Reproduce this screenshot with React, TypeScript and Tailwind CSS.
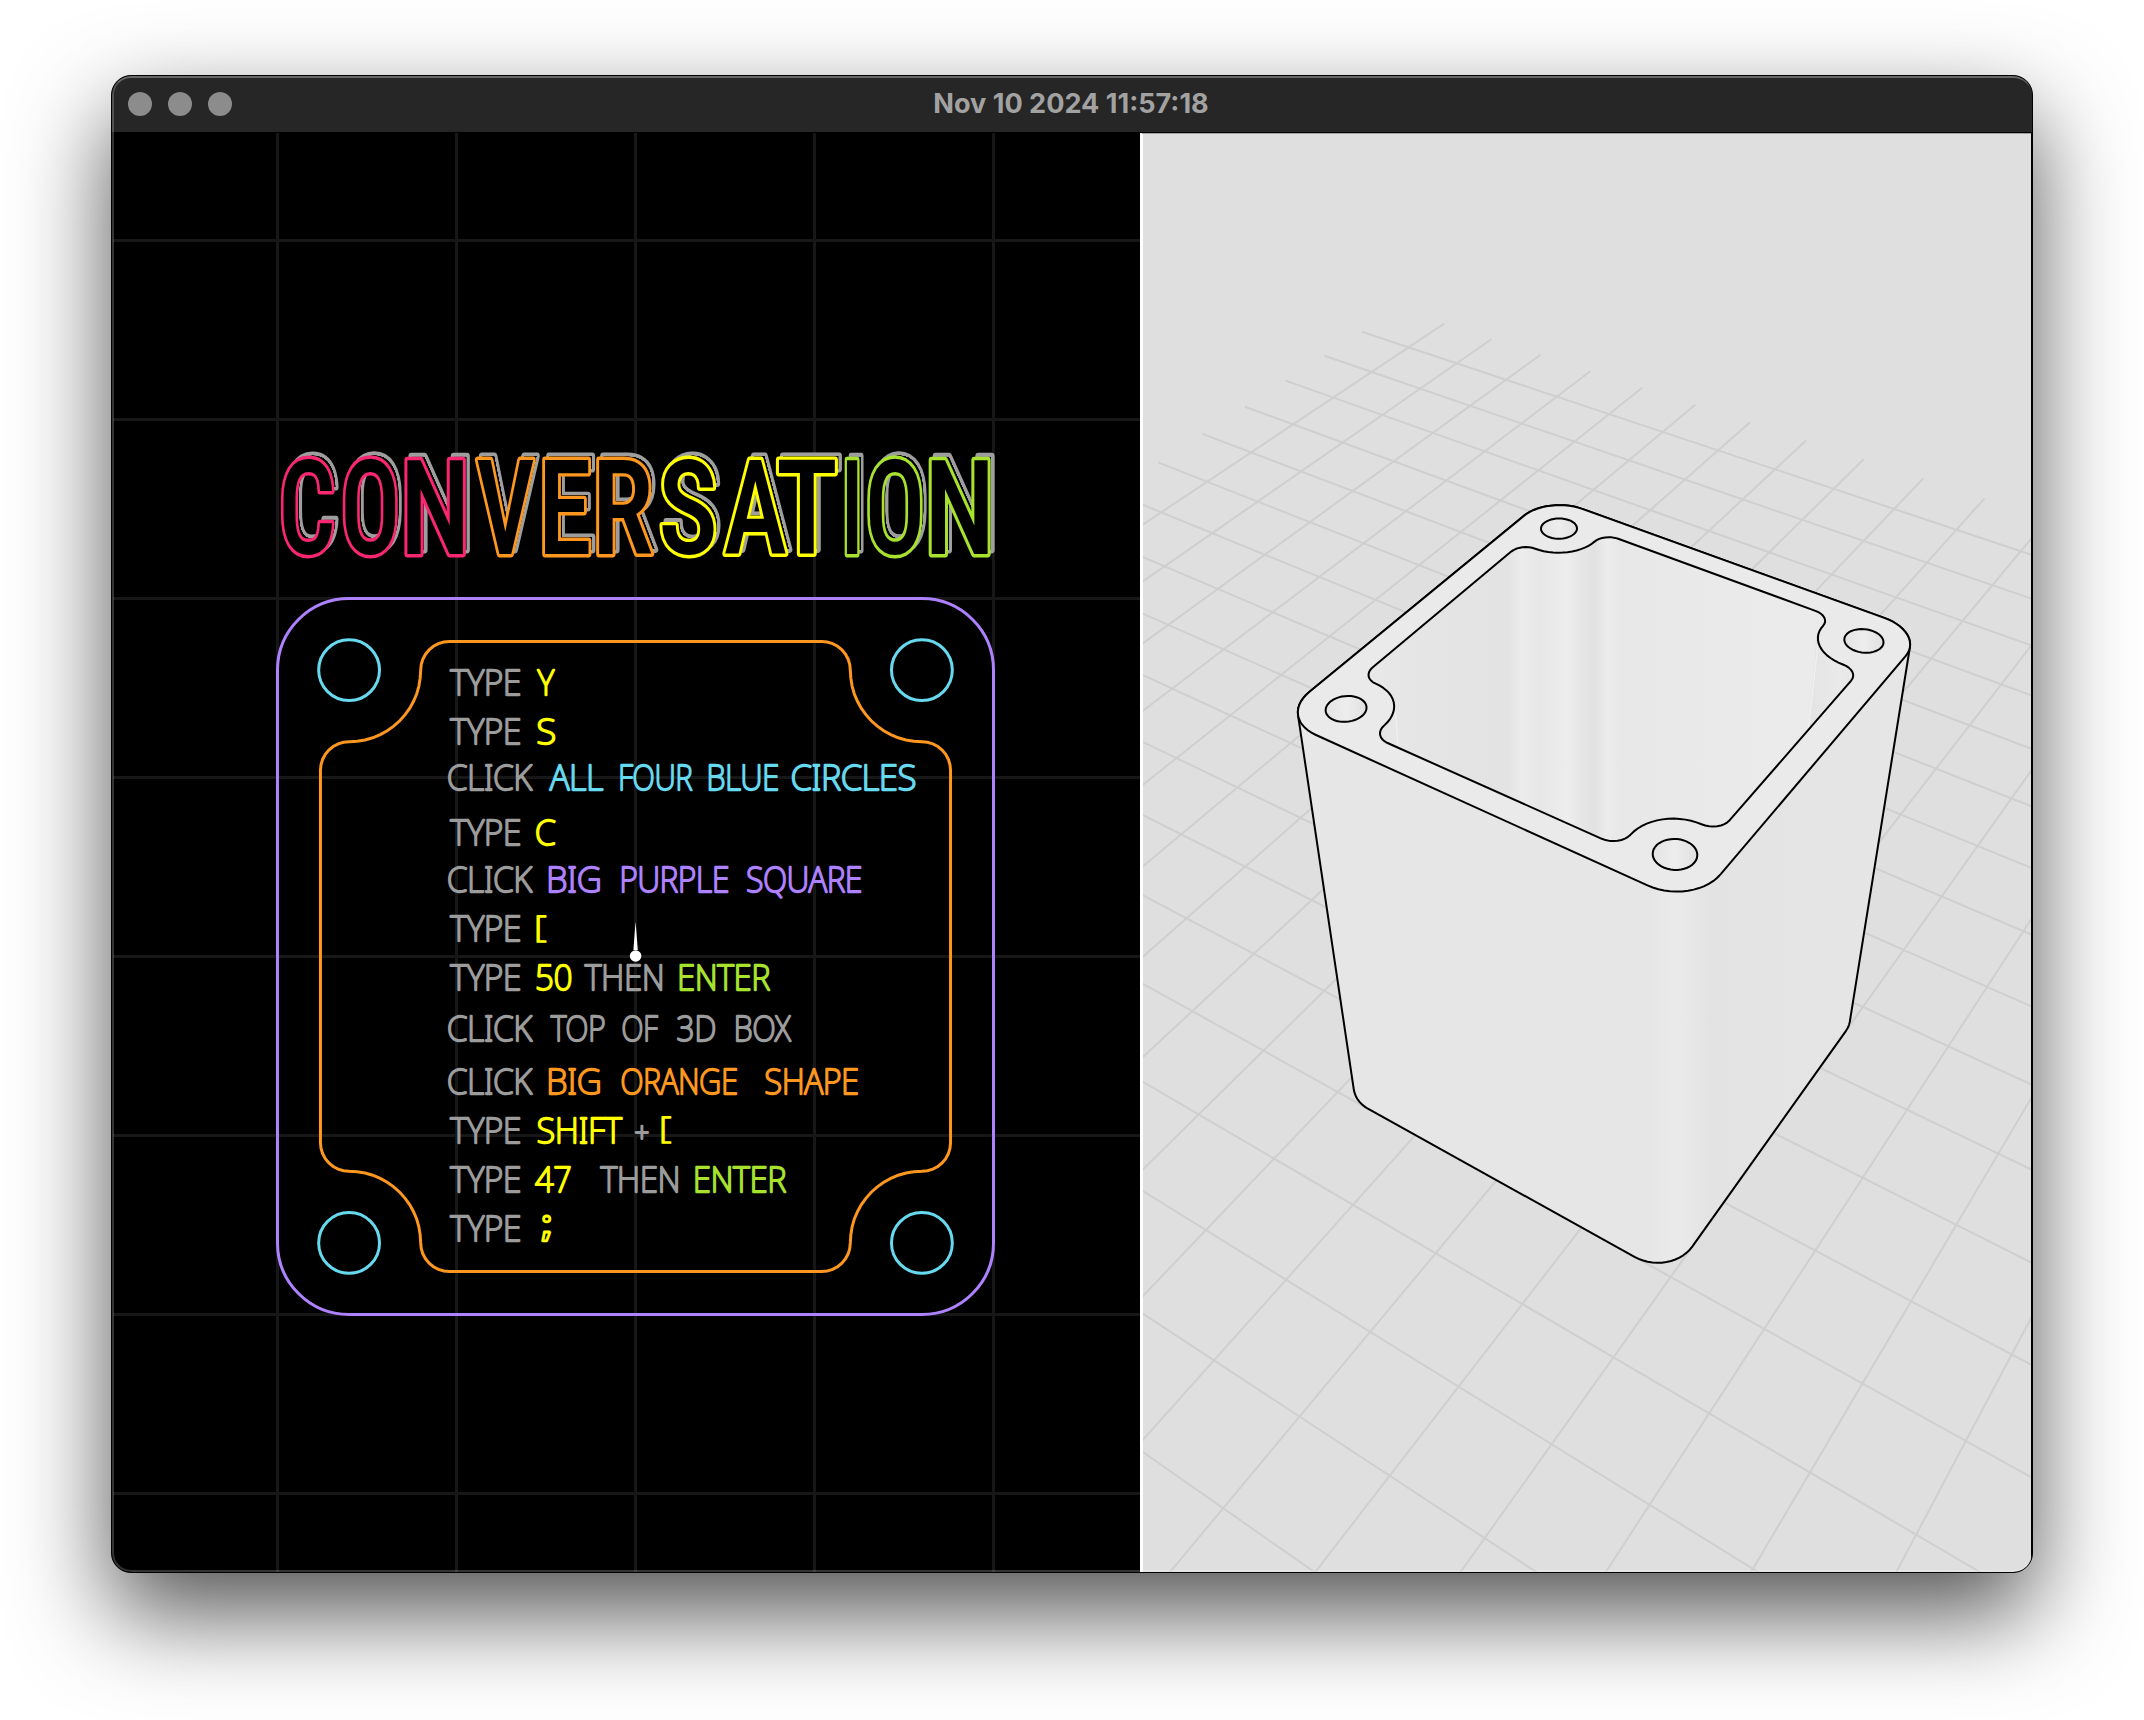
import React from "react";

type Pt = [number, number];

/* ---------- palette ---------- */
const GREY = "#9c9c9c";
const YELLOW = "#ffff00";
const CYAN = "#66d9ef";
const PURPLE = "#ae81ff";
const GREEN = "#a6e22e";
const ORANGE = "#fd971f";
const PINK = "#f92672";

/* ---------- projective geometry ---------- */
function solve(a: number[][], b: number[]): number[] {
  const n = b.length;
  const m = a.map((row, i) => [...row, b[i]]);
  for (let c = 0; c < n; c++) {
    let p = c;
    for (let r = c + 1; r < n; r++) if (Math.abs(m[r][c]) > Math.abs(m[p][c])) p = r;
    [m[c], m[p]] = [m[p], m[c]];
    for (let r = 0; r < n; r++) {
      if (r === c) continue;
      const f = m[r][c] / m[c][c];
      for (let k = c; k <= n; k++) m[r][k] -= f * m[c][k];
    }
  }
  return m.map((row, i) => row[n] / row[i]);
}

/** Least-squares plane-to-screen projection from point pairs. */
function plane(pairs: [Pt, Pt][]): (u: number, v: number) => Pt {
  const rows: number[][] = [];
  const rhs: number[] = [];
  for (const [[u, v], [sx, sy]] of pairs) {
    const x = (sx - 1600) / 500;
    const y = (sy - 900) / 500;
    rows.push([u, v, 1, 0, 0, 0, -u * x, -v * x], [0, 0, 0, u, v, 1, -u * y, -v * y]);
    rhs.push(x, y);
  }
  const ata = Array.from({ length: 8 }, (_, i) =>
    Array.from({ length: 8 }, (_, j) => rows.reduce((s, r) => s + r[i] * r[j], 0)),
  );
  const atb = Array.from({ length: 8 }, (_, i) => rows.reduce((s, r, k) => s + r[i] * rhs[k], 0));
  const h = solve(ata, atb);
  return (u, v) => {
    const w = h[6] * u + h[7] * v + 1;
    return [1600 + (500 * (h[0] * u + h[1] * v + h[2])) / w, 900 + (500 * (h[3] * u + h[4] * v + h[5])) / w];
  };
}

const ground = plane([
  [[0, 0], [1671, 1277.3]],
  [[0, 4], [1338.1, 1091.7]],
  [[4, 0], [1861, 1004.1]],
  [[13, 2], [2025.2, 552.3]],
  [[7, 13], [1161.2, 511.9]],
  [[13, 13], [1408.1, 347.5]],
  [[14, 13], [1444.2, 323.7]],
  [[14, 8], [1695, 404.8]],
  [[14, 5], [1862.6, 459]],
  [[14, 3], [1982.6, 498.5]],
  [[13, 14], [1362.1, 331.6]],
  [[8, 14], [1158.4, 462.5]],
  [[-3, 0], [1485.6, 1538.8]],
  [[-1, -3], [1914.9, 1534.4]],
  [[-4, 2], [1223.8, 1509.7]],
  [[0, -3], [1965.5, 1441.2]],
]);

const lid = plane([
  [[4, 4], [1559, 528.5]],
  [[36, 4], [1863.9, 640.8]],
  [[36, 36], [1675, 854.3]],
  [[4, 36], [1346.1, 708.8]],
]);

function arc(cx: number, cy: number, r: number, from: number, to: number, n = 14): Pt[] {
  return Array.from({ length: n + 1 }, (_, i) => {
    const t = ((from + ((to - from) * i) / n) * Math.PI) / 180;
    return [cx + r * Math.cos(t), cy + r * Math.sin(t)] as Pt;
  });
}

/* outline of the 40 mm square with 4 mm corners */
const outer: Pt[] = [
  ...arc(36, 4, 4, -90, 0),
  ...arc(36, 36, 4, 0, 90),
  ...arc(4, 36, 4, 90, 180),
  ...arc(4, 4, 4, 180, 270),
];

/* cavity outline: notched around each screw hole */
const notch: Pt[] = [
  ...arc(30.4, 4, 1.6, -90, 0, 8),
  ...arc(36, 4, 4, 180, 90),
  ...arc(36, 9.6, 1.6, -90, 0, 8),
];
const spin = (p: Pt, k: number): Pt => {
  let [x, y] = p;
  for (let i = 0; i < k; i++) [x, y] = [40 - y, x];
  return [x, y];
};
const cavity: Pt[] = [0, 1, 2, 3].flatMap((k) => notch.map((p) => spin(p, k)));
const holes: Pt[] = [[4, 4], [36, 4], [36, 36], [4, 36]];

const toPath = (pts: Pt[]) => "M" + pts.map(([x, y]) => `${x.toFixed(2)} ${y.toFixed(2)}`).join("L") + "Z";
const onLid = (pts: Pt[]) => toPath(pts.map(([x, y]) => lid(x, y)));

function hull(points: Pt[]): Pt[] {
  const p = [...points].sort((a, b) => a[0] - b[0] || a[1] - b[1]);
  const cross = (o: Pt, a: Pt, b: Pt) => (a[0] - o[0]) * (b[1] - o[1]) - (a[1] - o[1]) * (b[0] - o[0]);
  const half = (src: Pt[]) => {
    const out: Pt[] = [];
    for (const q of src) {
      while (out.length > 1 && cross(out[out.length - 2], out[out.length - 1], q) <= 0) out.pop();
      out.push(q);
    }
    out.pop();
    return out;
  };
  return [...half(p), ...half([...p].reverse())];
}

const silhouette = toPath(
  hull([...outer.map(([x, y]) => lid(x, y)), ...outer.map(([x, y]) => ground(4 - y / 10, 4 - x / 10))]),
);

/* ---------- lettering ---------- */
const pen = document.createElement("canvas").getContext("2d")!;

/** Ink extent of a text at the given size. */
function inkBox(text: string, weight: number, family: string, size: number, stretch: "normal" | "condensed") {
  pen.font = `${weight} 500px ${family}`;
  (pen as unknown as { fontStretch: string }).fontStretch = stretch;
  const m = pen.measureText(text);
  return { left: (-m.actualBoundingBoxLeft * size) / 500, right: (m.actualBoundingBoxRight * size) / 500 };
}

interface WordProps {
  text: string;
  x0: number;
  x1: number;
  y: number;
  color: string;
  size?: number;
  weight?: number;
}

/** One word whose ink spans x0..x1 on baseline y. */
function Word({ text, x0, x1, y, color, size = 35, weight = 2.3 }: WordProps) {
  const box = inkBox(text, 100, '"Noto Sans"', size, "normal");
  const sx = (x1 - x0) / (box.right - box.left + weight);
  return (
    <text
      transform={`translate(${x0 + (weight / 2 - box.left) * sx} ${y - 1}) scale(${sx} 1)`}
      fontSize={size}
      fill={color}
      stroke={color}
      strokeWidth={weight}
      strokeLinejoin="round"
      className="font-['Noto_Sans',sans-serif] font-thin"
    >
      {text}
    </text>
  );
}

type Token = [string, number, number, string];
const TYPE: Token = ["TYPE", 58, 272, GREY];
const CLICK: Token = ["CLICK", 54, 309, GREY];

const lines: { y: number; words: Token[] }[] = [
  { y: 696.3, words: [TYPE, ["Y", 320, 376, YELLOW]] },
  { y: 745.3, words: [TYPE, ["S", 321, 377, YELLOW]] },
  {
    y: 791,
    words: [CLICK, ["ALL", 357, 522, CYAN], ["FOUR", 570, 789, CYAN], ["BLUE", 835, 1046, CYAN], ["CIRCLES", 1085, 1458, CYAN]],
  },
  { y: 846, words: [TYPE, ["C", 318, 378, YELLOW]] },
  { y: 893.3, words: [CLICK, ["BIG", 355, 510, PURPLE], ["PURPLE", 574, 896, PURPLE], ["SQUARE", 950, 1295, PURPLE]] },
  { y: 942.3, words: [TYPE] },
  { y: 991, words: [TYPE, ["50", 318, 425, YELLOW], ["THEN", 462, 698, GREY], ["ENTER", 748, 1022, GREEN]] },
  { y: 1041.7, words: [CLICK, ["TOP", 360, 526, GREY], ["OF", 577, 686, GREY], ["3D", 741, 857, GREY], ["BOX", 917, 1085, GREY]] },
  { y: 1095, words: [CLICK, ["BIG", 355, 510, ORANGE], ["ORANGE", 574, 922, ORANGE], ["SHAPE", 1005, 1285, ORANGE]] },
  { y: 1143.7, words: [TYPE, ["SHIFT", 322, 579, YELLOW]] },
  { y: 1192.7, words: [TYPE, ["47", 313, 423, YELLOW], ["THEN", 509, 746, GREY], ["ENTER", 795, 1070, GREEN]] },
  { y: 1241.7, words: [TYPE] },
];

const banner: [string, number, number, string][] = [
  ["C", 280.3, 336, PINK],
  ["O", 342, 399, PINK],
  ["N", 404, 467.5, PINK],
  ["V", 473.3, 536.5, ORANGE],
  ["E", 541.7, 592, ORANGE],
  ["R", 595.7, 655, ORANGE],
  ["S", 658.5, 717.5, YELLOW],
  ["A", 722.3, 788.8, YELLOW],
  ["T", 774.5, 839, YELLOW],
  ["I", 844, 860.7, GREEN],
  ["O", 866.7, 924, GREEN],
  ["N", 928.3, 992.3, GREEN],
];

function BannerLetter({ ch, x0, x1, color }: { ch: string; x0: number; x1: number; color: string }) {
  const size = 131.8;
  const line = 3.4;
  const box = inkBox(ch, 500, "Roboto", size, "condensed");
  const sx = (x1 - x0) / (box.right - box.left + 2 * line);
  return (
    <text
      transform={`translate(${x0 + (line - box.left) * sx} 553.9) scale(${sx} 1)`}
      fontSize={size}
      fill="#000"
      stroke={color}
      strokeWidth={2 * line}
      strokeLinejoin="round"
      paintOrder="stroke"
      className="font-['Roboto',sans-serif] font-medium [font-stretch:condensed]"
    >
      {ch}
    </text>
  );
}

/* ---------- sketch pane ---------- */
function SketchPane() {
  const xs = [277.5, 456.5, 635.5, 814.5, 993.5];
  const ys = [240.5, 419.5, 598.5, 777.5, 956.5, 1135.5, 1314.5, 1493.5];
  return (
    <svg viewBox="113 133 1027 1439" className="block h-[1439px] w-[1027px] bg-black">
      <defs>
        {/* grey copy of the outlines, shifted up and right behind the letters */}
        <filter id="extrude" filterUnits="userSpaceOnUse" x={270} y={440} width={740} height={130} colorInterpolationFilters="sRGB">
          <feOffset in="SourceGraphic" dx={4} dy={-4} />
          <feColorMatrix values="2 2 2 0 0  2 2 2 0 0  2 2 2 0 0  0 0 0 1 0" />
          <feColorMatrix values=".62 0 0 0 0  0 .62 0 0 0  0 0 .62 0 0  0 0 0 1 0" result="back" />
          <feMerge>
            <feMergeNode in="back" />
            <feMergeNode in="SourceGraphic" />
          </feMerge>
        </filter>
      </defs>
      <g stroke="#171717" strokeWidth={3}>
        {xs.map((x) => (
          <line key={x} x1={x} x2={x} y1={133} y2={1572} />
        ))}
        {ys.map((y) => (
          <line key={y} x1={113} x2={1140} y1={y} y2={y} />
        ))}
      </g>

      <g filter="url(#extrude)">
        {banner.map(([ch, x0, x1, color], i) => (
          <BannerLetter key={i} ch={ch} x0={x0} x1={x1} color={color} />
        ))}
      </g>

      <g transform="translate(277.5 598.5) scale(17.9)" fill="none" strokeWidth={3 / 17.9}>
        <rect width={40} height={40} rx={4} stroke={PURPLE} />
        <path d={toPath(cavity)} stroke={ORANGE} />
        {holes.map(([x, y]) => (
          <circle key={`${x}-${y}`} cx={x} cy={y} r={1.7} stroke={CYAN} />
        ))}
      </g>

      {lines.map(({ y, words }) =>
        words.map(([text, a, b, color]) => (
          <Word key={`${y}-${a}`} text={text} x0={430 + a / 3} x1={430 + b / 3} y={y} color={color} />
        )),
      )}
      <Word text="[" x0={536} x1={546.7} y={937.8} color={YELLOW} size={29.7} weight={1.8} />
      <Word text="+" x0={634.7} x1={649} y={1142.8} color={GREY} size={27} />
      <Word text="[" x0={661} x1={671.5} y={1139.2} color={YELLOW} size={29.7} weight={1.8} />
      <text
        x={541.5}
        y={1235.5}
        fontSize={36}
        fill="none"
        stroke={YELLOW}
        strokeWidth={2.8}
        strokeLinejoin="round"
        className="font-['Noto_Sans',sans-serif] font-bold"
      >
        ;
      </text>

      <path d="M635.6 921.5L637.8 950H633.4Z" fill="#fff" />
      <circle cx={635.6} cy={956} r={5.8} fill="#fff" />
    </svg>
  );
}

/* ---------- solid pane ---------- */
function SolidPane() {
  const seg = (a: Pt, b: Pt, key: string) => <line key={key} x1={a[0]} y1={a[1]} x2={b[0]} y2={b[1]} />;
  const idx = Array.from({ length: 23 }, (_, i) => i - 9);
  return (
    <svg viewBox="1143 134 888 1438" className="block h-[1438px] w-[888px] bg-[#dfdfdf]">
      <defs>
        <linearGradient id="walls" gradientUnits="userSpaceOnUse" x1={1298} x2={1910} y1={0} y2={0}>
          <stop offset="0" stopColor="#e8e8e8" />
          <stop offset=".05" stopColor="#e6e6e6" />
          <stop offset=".57" stopColor="#e6e6e6" />
          <stop offset=".612" stopColor="#eaeaea" />
          <stop offset=".64" stopColor="#e8e8e8" />
          <stop offset=".67" stopColor="#e3e3e3" />
          <stop offset="1" stopColor="#e6e6e6" />
        </linearGradient>
        <linearGradient id="inside" gradientUnits="userSpaceOnUse" x1={1367} x2={1867} y1={0} y2={0}>
          <stop offset="0" stopColor="#e8e8e8" />
          <stop offset=".16" stopColor="#e4e4e4" />
          <stop offset=".28" stopColor="#e3e3e3" />
          <stop offset=".31" stopColor="#ececec" />
          <stop offset=".345" stopColor="#e7e7e7" />
          <stop offset=".4" stopColor="#ededed" />
          <stop offset=".435" stopColor="#e5e5e5" />
          <stop offset=".455" stopColor="#e1e1e1" />
          <stop offset=".48" stopColor="#ececec" />
          <stop offset=".505" stopColor="#e8e8e8" />
          <stop offset=".75" stopColor="#eaeaea" />
          <stop offset="1" stopColor="#ebebeb" />
        </linearGradient>
        <linearGradient id="bore">
          <stop offset="0" stopColor="#e4e4e4" />
          <stop offset=".5" stopColor="#ededed" />
          <stop offset="1" stopColor="#e1e1e1" />
        </linearGradient>
        <linearGradient id="recess">
          <stop offset="0" stopColor="#e3e3e3" />
          <stop offset=".6" stopColor="#eaeaea" />
          <stop offset="1" stopColor="#e6e6e6" />
        </linearGradient>
        <clipPath id="cavity">
          <path d={onLid(cavity)} />
        </clipPath>
      </defs>

      <g stroke="#cfcfcf" strokeWidth={2}>
        {idx.map((j) => seg(ground(-9, j), ground(14, j), `i${j}`))}
        {idx.map((i) => seg(ground(i, -9), ground(i, 14), `j${i}`))}
      </g>

      <path d={silhouette} fill="url(#walls)" stroke="#000" strokeWidth={2} strokeLinejoin="round" />
      <path d={onLid(outer)} fill="#eaeaea" stroke="#000" strokeWidth={2} />
      <path d={onLid(cavity)} fill="url(#inside)" />
      <g clipPath="url(#cavity)">
        <path d="M1816 640L1808 735L1860 735V640Z" fill="url(#recess)" />
        <path d="M1817.6 646L1808.4 730M1395.5 712L1397.7 745" stroke="#f1f1f1" strokeWidth={1.2} fill="none" />
      </g>
      <path d={onLid(cavity)} fill="none" stroke="#000" strokeWidth={2} strokeLinejoin="round" />
      {holes.map(([x, y]) => (
        <path key={`${x}-${y}`} d={onLid(arc(x, y, 1.7, 0, 350, 40))} fill="url(#bore)" stroke="#000" strokeWidth={2} />
      ))}
    </svg>
  );
}

export default function App() {
  return (
    <div className="h-[1720px] w-[2144px] overflow-hidden bg-white pt-[75px] pl-[111px]">
      <div className="relative h-[1498px] w-[1922px] overflow-hidden rounded-[20px] border border-black bg-black [box-shadow:0_40px_96px_rgba(0,0,0,.68)]">
        <header className="grid h-[56px] grid-cols-[1fr_auto_1fr] items-center bg-[#262626] px-4">
          <div className="flex gap-4">
            <span className="size-6 rounded-full bg-[#8c8c8c]" />
            <span className="size-6 rounded-full bg-[#8c8c8c]" />
            <span className="size-6 rounded-full bg-[#8c8c8c]" />
          </div>
          <h1 className="-mt-px -translate-x-px font-['Inter',sans-serif] text-[27.1px] leading-8 font-bold text-[#a2a2a2]">
            Nov 10 2024 11:57:18
          </h1>
        </header>
        <main className="flex pt-px pl-px">
          <SketchPane />
          <section className="border-t border-l-[3px] border-t-[#a0a0a0] border-l-white">
            <SolidPane />
          </section>
        </main>
        <div className="pointer-events-none absolute inset-0 rounded-[19px] border-2 border-r-0 border-white/20 border-t-white/30" />
      </div>
    </div>
  );
}
